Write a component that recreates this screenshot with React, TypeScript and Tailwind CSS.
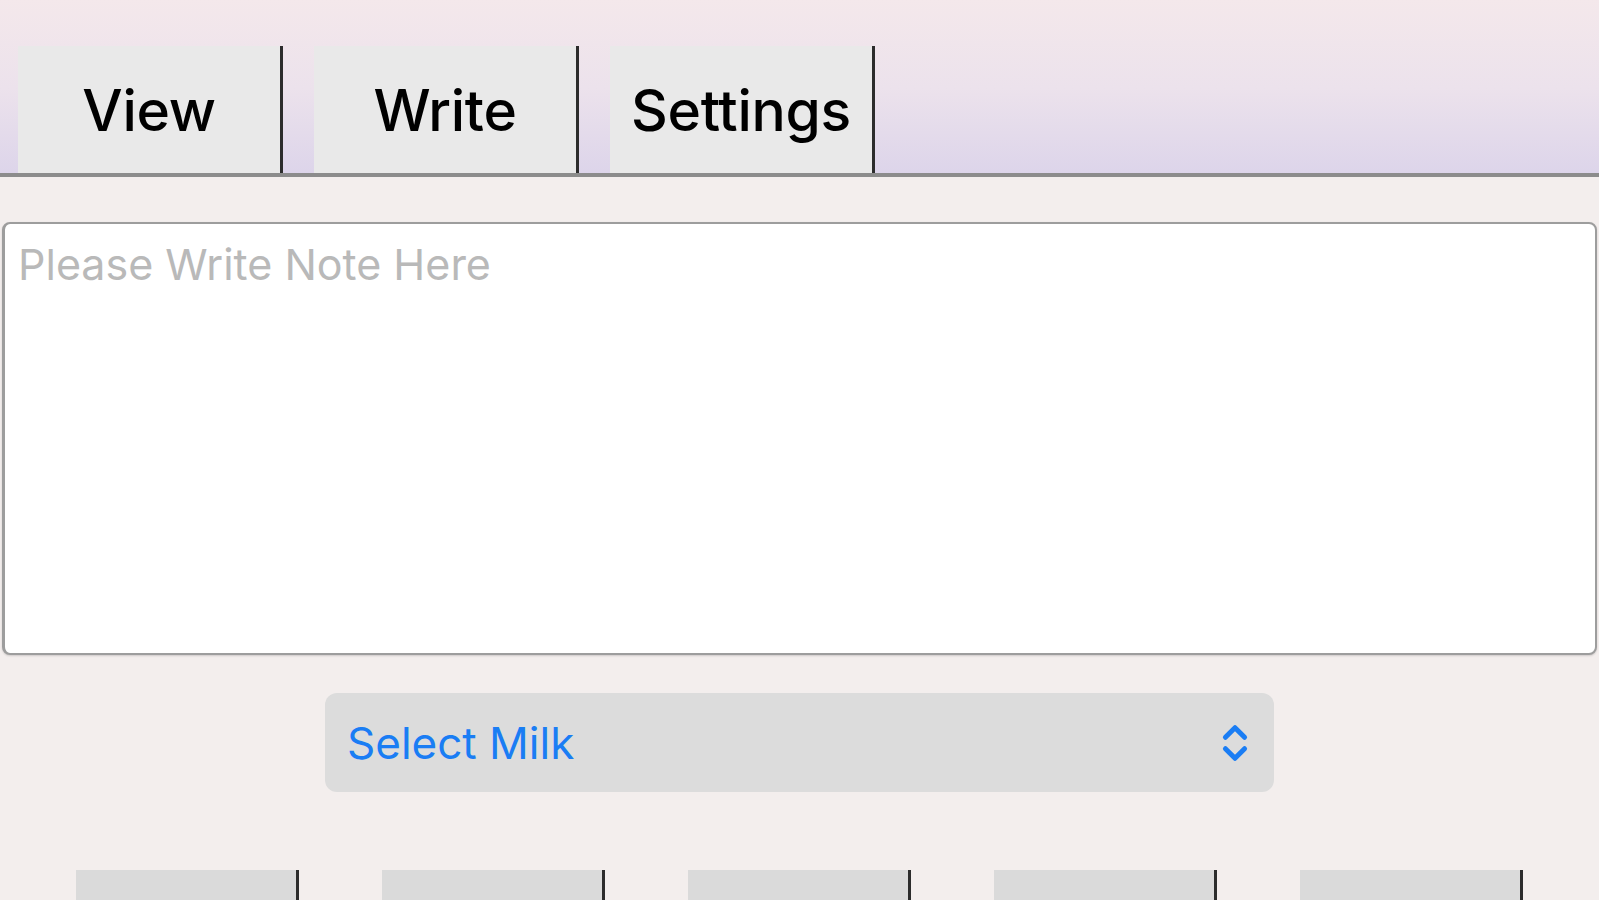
import { ChevronsUpDown } from 'lucide-react'

const tabs = ['View', 'Write', 'Settings']
const actions = [0, 1, 2, 3, 4]

export default function App() {
  return (
    <div className="h-[900px] w-full overflow-hidden bg-[#f3eeed] font-['Inter','Liberation_Sans',sans-serif]">
      {/* tab header */}
      <div className="bg-gradient-to-b from-[#f4e8eb] via-[#ece2ec] to-[#dcd4ea] pt-[46px]">
        <div className="flex gap-[31px] pl-[18px]">
          {tabs.map((t) => (
            <button
              key={t}
              className="flex h-[127px] w-[265px] items-center justify-center border-r-[3px] border-[#2c2c2c] bg-[#e9e9e9] pt-[3px] text-[57px] font-medium tracking-[-0.3px] text-black"
            >
              {t}
            </button>
          ))}
        </div>
        <div className="h-[4px] bg-[#8c8c8c]" />
      </div>

      {/* note input */}
      <div className="px-[2px] pt-[45px]">
        <textarea
          placeholder="Please Write Note Here"
          className="block h-[433px] w-full resize-none rounded-[8px] border-2 border-l-[3px] border-[#9d9d9d] bg-white px-[13px] pt-[15px] text-[43px] leading-[1.2] text-black shadow-[0_1px_2px_rgba(0,0,0,0.15)] outline-none placeholder:text-[#b9b9b9]"
        />
      </div>

      {/* milk select */}
      <div className="flex justify-center pt-[38px]">
        <button className="flex h-[99px] w-[949px] items-center justify-between rounded-[12px] bg-[#dcdcdc] pl-[22px] pr-[16px] text-[44px] text-[#1a7df4]">
          <span>Select Milk</span>
          <ChevronsUpDown className="h-[46px] w-[46px]" strokeWidth={2.6} />
        </button>
      </div>

      {/* bottom actions */}
      <div className="flex justify-center gap-[83px] pt-[78px]">
        {actions.map((a) => (
          <button
            key={a}
            className="h-[80px] w-[223px] border-r-[3px] border-[#2c2c2c] bg-[#dadada]"
          />
        ))}
      </div>
    </div>
  )
}
